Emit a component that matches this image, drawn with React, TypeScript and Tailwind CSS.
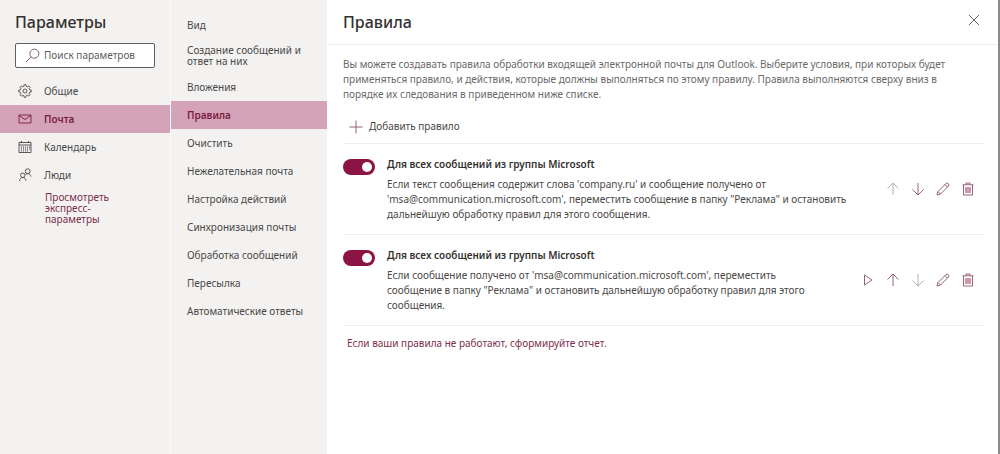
import React, { useState } from 'react';

type IconName = 'gear' | 'mail' | 'calendar' | 'people';

interface Rule {
    id: number;
    title: string;
    text: string;
    canRun: boolean;
    canMoveUp: boolean;
    canMoveDown: boolean;
}

const sections: { label: string; icon: IconName }[] = [
    { label: 'Общие', icon: 'gear' },
    { label: 'Почта', icon: 'mail' },
    { label: 'Календарь', icon: 'calendar' },
    { label: 'Люди', icon: 'people' },
];

const pages = [
    'Вид',
    'Создание сообщений и ответ на них',
    'Вложения',
    'Правила',
    'Очистить',
    'Нежелательная почта',
    'Настройка действий',
    'Синхронизация почты',
    'Обработка сообщений',
    'Пересылка',
    'Автоматические ответы',
];

const rules: Rule[] = [
    {
        id: 1,
        title: 'Для всех сообщений из группы Microsoft',
        text: 'Если текст сообщения содержит слова \'company.ru\' и сообщение получено от \'msa@communication.microsoft.com\', переместить сообщение в папку "Реклама" и остановить дальнейшую обработку правил для этого сообщения.',
        canRun: false,
        canMoveUp: false,
        canMoveDown: true,
    },
    {
        id: 2,
        title: 'Для всех сообщений из группы Microsoft',
        text: 'Если сообщение получено от \'msa@communication.microsoft.com\', переместить сообщение в папку "Реклама" и остановить дальнейшую обработку правил для этого сообщения.',
        canRun: true,
        canMoveUp: true,
        canMoveDown: false,
    },
];

const Svg: React.FC<{ size?: number; children: React.ReactNode }> = ({ size = 14, children }) => (
    <svg width={size} height={size} viewBox="0 0 14 14" fill="none" stroke="currentColor" strokeWidth="0.9" aria-hidden="true" className="shrink-0">
        {children}
    </svg>
);

const gearPath = Array.from({ length: 8 }, (_, i) => {
    const point = (deg: number, r: number) => {
        const a = ((i * 45 + deg) * Math.PI) / 180;
        return `${(7 + r * Math.cos(a)).toFixed(2)} ${(7 + r * Math.sin(a)).toFixed(2)}`;
    };
    return `${i ? 'L' : 'M'}${point(-14, 4.8)} L${point(-9, 6.3)} L${point(9, 6.3)} L${point(14, 4.8)}`;
}).join(' ') + 'Z';

const SectionIcon: React.FC<{ name: IconName }> = ({ name }) => {
    switch (name) {
        case 'gear':
            return <Svg><path d={gearPath} /><circle cx="7" cy="7" r="2" /></Svg>;
        case 'mail':
            return <Svg><path d="M1 3h12v8H1zM1 3.5l6 4 6-4" /></Svg>;
        case 'calendar':
            return (
                <Svg>
                    <path d="M1 2.5h12v10H1zM1 5h12M3.5 1v2M10.500 1v2" />
                    <path d="M3.500 6.500v5M5.500 6.500v5M7.500 6.500v5M9.500 6.500v5M11.500 6.500v3" strokeDasharray="1.300 0.600" />
                </Svg>
            );
        default:
            return (
                <Svg>
                    <circle cx="4.800" cy="7.300" r="2.200" />
                    <path d="M1.500 13c.2-2.200 1.500-3.500 3.300-3.500S7.600 10.800 8 12.800" />
                    <circle cx="9.700" cy="3.200" r="2.400" />
                    <path d="M7.500 6.300c2-1.300 4.700-.6 5.600 2.200" />
                </Svg>
            );
    }
};

const RuleItem: React.FC<{ rule: Rule }> = ({ rule }) => {
    const [enabled, setEnabled] = useState(true);
    const buttonClass = 'flex h-6 w-[25px] items-center justify-center text-[#8c5069] disabled:text-[#a9a7a7]';

    return (
        <li className="flex items-start border-b border-[#f0efef] pb-3 pt-[11px]">
            <input
                type="checkbox"
                role="switch"
                checked={enabled}
                onChange={() => setEnabled(!enabled)}
                aria-label={rule.title}
                className="mt-1 flex h-4 w-8 shrink-0 appearance-none items-center rounded-full bg-[#a19f9d] px-[3px] before:size-[10px] before:rounded-full before:bg-white before:content-[''] checked:justify-end checked:bg-[#8c1444]"
            />
            <div className="ml-3 min-w-0 flex-1 pr-7">
                <h2 className="leading-[18px] font-semibold text-[#323130]">{rule.title}</h2>
                <p className="mt-1 leading-[15px]">{rule.text}</p>
            </div>
            <div className="flex shrink-0 self-center pr-1">
                {rule.canRun && (
                    <button aria-label="Запустить" className={buttonClass}>
                        <Svg><path d="M3.500 2v10L11 7z" /></Svg>
                    </button>
                )}
                <button aria-label="Вверх" disabled={!rule.canMoveUp} className={buttonClass}>
                    <Svg><path d="M7 13V1M1.500 6.500L7 1l5.500 5.500" /></Svg>
                </button>
                <button aria-label="Вниз" disabled={!rule.canMoveDown} className={buttonClass}>
                    <Svg><path d="M7 1v12M1.500 7.500L7 13l5.500-5.500" /></Svg>
                </button>
                <button aria-label="Изменить" className={buttonClass}>
                    <Svg><path d="M1 13l1-3.500 8-8q1.200-1 2.300.2t.2 2.300l-8 8zM2 9.500l2.500 2.500M9 2.500l2.500 2.500" /></Svg>
                </button>
                <button aria-label="Удалить" className={buttonClass}>
                    <Svg>
                        <path d="M4 5h6v6H4z" fill="#e5b8cb" stroke="none" />
                        <path d="M2.500 3v10h9V3M1.500 2.800h11M5 2.500V1h4v1.500" />
                        <path d="M5 5v6M7 5v6M9 5v6" strokeWidth="0.6" />
                    </Svg>
                </button>
            </div>
        </li>
    );
};

const App: React.FC = () => {
    const [section, setSection] = useState('Почта');
    const [page, setPage] = useState('Правила');

    return (
        <div className="flex min-h-screen bg-[#f3f2f1] font-['Noto_Sans','Open_Sans',sans-serif] text-[10px] text-[#4a4847]">
            <aside className="w-[171px] shrink-0 border-r border-[#faf9f8]">
                <h1 className="px-[15px] pt-2 text-base leading-7 font-medium text-[#323130]">Параметры</h1>
                <label className="mx-[15px] mt-[7px] flex h-[25px] items-center gap-1 rounded-xs border border-[#605e5c] bg-white pl-[9px] text-[#7d5566]">
                    <Svg size={15}><circle cx="8.700" cy="5.300" r="4.200" /><path d="M5.700 8.300L1 13" /></Svg>
                    <input type="text" placeholder="Поиск параметров" aria-label="Поиск параметров" className="w-full min-w-0 bg-transparent outline-none placeholder:text-[#605e5c]" />
                </label>
                <nav className="mt-[9px]">
                    {sections.map(s => (
                        <button
                            key={s.label}
                            onClick={() => setSection(s.label)}
                            className={`flex h-7 w-full items-center gap-3 pl-[18px] text-left ${s.label === section ? 'bg-[#d4a3b7] font-semibold text-[#7a1c42]' : ''}`}
                        >
                            <SectionIcon name={s.icon} />
                            {s.label}
                        </button>
                    ))}
                </nav>
                <a href="#express" className="ml-[45px] mt-[3px] block w-20 leading-[11px] text-[#7b2f4d]">Просмотреть экспресс-параметры</a>
            </aside>

            <nav className="w-[156px] shrink-0 pt-[11px]">
                {pages.map(p => (
                    <button
                        key={p}
                        onClick={() => setPage(p)}
                        className={`flex min-h-7 w-full items-center py-[6px] pl-4 pr-3 text-left leading-[11px] ${p === page ? 'bg-[#d4a3b7] font-semibold text-[#7a1c42]' : ''}`}
                    >
                        {p}
                    </button>
                ))}
            </nav>

            <main className="min-w-0 flex-1 border-r-2 border-[#8a8a8a] bg-white">
                <header className="flex h-[45px] items-center justify-between border-b border-[#f0efef] pl-4 pr-[17px]">
                    <h1 className="text-base font-medium text-[#323130]">Правила</h1>
                    <button aria-label="Закрыть" className="-mt-1 text-[#605e5c]">
                        <Svg><path d="M2 2l10 10M12 2L2 12" /></Svg>
                    </button>
                </header>
                <div className="pl-4 pr-[14px] pt-3">
                    <p className="pr-3 leading-[15px] text-[#6b6967]">
                        Вы можете создавать правила обработки входящей электронной почты для Outlook. Выберите условия, при которых будет применяться правило, и действия, которые должны выполняться по этому правилу. Правила выполняются сверху вниз в порядке их следования в приведенном ниже списке.
                    </p>
                    <div className="flex h-[42px] items-center border-b border-[#f0efef] pl-[6px] pt-2">
                        <button className="flex items-center gap-[6px]">
                            <span className="text-[#8c5069]"><Svg><path d="M7 .5v13M.5 7h13" /></Svg></span>
                            Добавить правило
                        </button>
                    </div>
                    <ul>
                        {rules.map(rule => <RuleItem key={rule.id} rule={rule} />)}
                    </ul>
                    <a href="#report" className="ml-1 mt-2 inline-block leading-[18px] text-[#7b2f4d]">Если ваши правила не работают, сформируйте отчет.</a>
                </div>
            </main>
        </div>
    );
};

export default App;
